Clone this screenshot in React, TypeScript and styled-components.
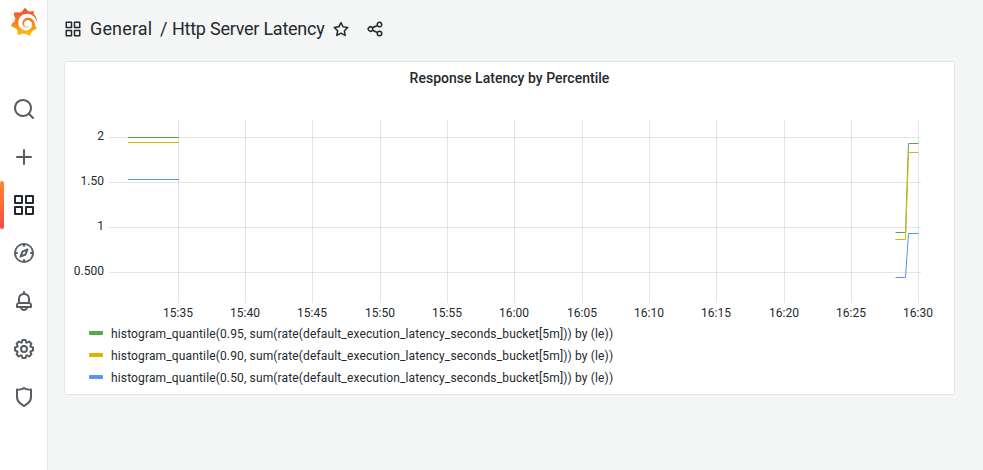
import React from "react";
import styled, { createGlobalStyle } from "styled-components";
import { SiGrafana } from "react-icons/si";

const GlobalStyle = createGlobalStyle`
  *, *::before, *::after { box-sizing: border-box; }
  body {
    margin: 0;
    background: #f4f5f5;
    color: #24292e;
    font-family: Roboto, "Liberation Sans", sans-serif;
    font-size: 14px;
  }
`;

const paths = {
  search:
    "M21.71,20.29,18,16.61A9,9,0,1,0,16.61,18l3.68,3.68a1,1,0,0,0,1.42,0A1,1,0,0,0,21.71,20.29ZM11,18a7,7,0,1,1,7-7A7,7,0,0,1,11,18Z",
  plus: "M19,11H13V5a1,1,0,0,0-2,0v6H5a1,1,0,0,0,0,2h6v6a1,1,0,0,0,2,0V13h6a1,1,0,0,0,0-2Z",
  apps: "M10,13H3a1,1,0,0,0-1,1v7a1,1,0,0,0,1,1h7a1,1,0,0,0,1-1V14A1,1,0,0,0,10,13ZM9,20H4V15H9ZM21,2H14a1,1,0,0,0-1,1v7a1,1,0,0,0,1,1h7a1,1,0,0,0,1-1V3A1,1,0,0,0,21,2ZM20,9H15V4h5Zm1,4H14a1,1,0,0,0-1,1v7a1,1,0,0,0,1,1h7a1,1,0,0,0,1-1V14A1,1,0,0,0,21,13Zm-1,7H15V15h5ZM10,2H3A1,1,0,0,0,2,3v7a1,1,0,0,0,1,1h7a1,1,0,0,0,1-1V3A1,1,0,0,0,10,2ZM9,9H4V4H9Z",
  compass:
    "M12,2A10,10,0,1,0,22,12,10,10,0,0,0,12,2Zm1,17.93V19a1,1,0,0,0-2,0v.93A8,8,0,0,1,4.07,13H5a1,1,0,0,0,0-2H4.07A8,8,0,0,1,11,4.07V5a1,1,0,0,0,2,0V4.07A8,8,0,0,1,19.93,11H19a1,1,0,0,0,0,2h.93A8,8,0,0,1,13,19.93ZM15.14,7.55l-5,2.12a1,1,0,0,0-.52.52l-2.12,5a1,1,0,0,0,.21,1.1,1,1,0,0,0,.7.29.93.93,0,0,0,.4-.08l5-2.12a1,1,0,0,0,.52-.52l2.12-5a1,1,0,0,0-1.31-1.31Zm-2.49,5.1-2.28,1,1-2.28,2.28-1Z",
  bell: "M18,13.18V10a6,6,0,0,0-5-5.91V3a1,1,0,0,0-2,0V4.09A6,6,0,0,0,6,10v3.18A3,3,0,0,0,4,16v2a1,1,0,0,0,1,1H8.14a4,4,0,0,0,7.72,0H19a1,1,0,0,0,1-1V16A3,3,0,0,0,18,13.18ZM8,10a4,4,0,0,1,8,0v3H8Zm4,10a2,2,0,0,1-1.72-1h3.44A2,2,0,0,1,12,20Zm6-3H6V16a1,1,0,0,1,1-1H17a1,1,0,0,1,1,1Z",
  cog: "M21.32,9.55l-1.89-.63.89-1.78A1,1,0,0,0,20.13,6L18,3.87a1,1,0,0,0-1.15-.19l-1.78.89-.63-1.89A1,1,0,0,0,13.5,2h-3a1,1,0,0,0-.95.68L8.92,4.57,7.14,3.68A1,1,0,0,0,6,3.87L3.87,6a1,1,0,0,0-.19,1.15l.89,1.78-1.89.63A1,1,0,0,0,2,10.5v3a1,1,0,0,0,.68.95l1.89.63-.89,1.78A1,1,0,0,0,3.87,18L6,20.13a1,1,0,0,0,1.15.19l1.78-.89.63,1.89a1,1,0,0,0,.95.68h3a1,1,0,0,0,.95-.68l.63-1.89,1.78.89A1,1,0,0,0,18,20.13L20.13,18a1,1,0,0,0,.19-1.15l-.89-1.78,1.89-.63A1,1,0,0,0,22,13.5v-3A1,1,0,0,0,21.32,9.55ZM20,12.78l-1.2.4A2,2,0,0,0,17.64,16l.57,1.14-1.1,1.1L16,17.64a2,2,0,0,0-2.79,1.16l-.4,1.2H11.22l-.4-1.2A2,2,0,0,0,8,17.64l-1.14.57-1.1-1.1L6.36,16A2,2,0,0,0,5.2,13.18L4,12.78V11.22l1.2-.4A2,2,0,0,0,6.36,8L5.79,6.89l1.1-1.1L8,6.36A2,2,0,0,0,10.82,5.2l.4-1.2h1.56l.4,1.2A2,2,0,0,0,16,6.36l1.14-.57,1.1,1.1L17.64,8a2,2,0,0,0,1.16,2.79l1.2.4ZM12,8a4,4,0,1,0,4,4A4,4,0,0,0,12,8Zm0,6a2,2,0,1,1,2-2A2,2,0,0,1,12,14Z",
  shield:
    "M19.63,3.65a1,1,0,0,0-.84-.2,8,8,0,0,1-6.22-1.27,1,1,0,0,0-1.14,0A8,8,0,0,1,5.21,3.45a1,1,0,0,0-.84.2A1,1,0,0,0,4,4.43v7.45a9,9,0,0,0,3.77,7.33l3.65,2.6a1,1,0,0,0,1.16,0l3.65-2.6A9,9,0,0,0,20,11.88V4.43A1,1,0,0,0,19.63,3.65ZM18,11.88a7,7,0,0,1-2.93,5.7L12,19.77,8.93,17.58A7,7,0,0,1,6,11.88V5.58a10,10,0,0,0,6-1.39,10,10,0,0,0,6,1.39Z",
  star: "M22,9.67A1,1,0,0,0,21.14,9l-5.69-.83L12.9,3a1,1,0,0,0-1.8,0L8.55,8.16,2.86,9a1,1,0,0,0-.81.68,1,1,0,0,0,.25,1l4.13,4-1,5.68A1,1,0,0,0,6.9,21.44L12,18.77l5.1,2.67a.93.93,0,0,0,.46.12,1,1,0,0,0,.59-.19,1,1,0,0,0,.4-1l-1-5.68,4.13-4A1,1,0,0,0,22,9.67Zm-6.15,4a1,1,0,0,0-.29.88l.72,4.2-3.76-2a1.06,1.06,0,0,0-.94,0l-3.76,2,.72-4.2a1,1,0,0,0-.29-.88l-3-3,4.21-.61a1,1,0,0,0,.76-.55L12,5.7l1.88,3.82a1,1,0,0,0,.76.55l4.21.61Z",
  share:
    "M18,14a4,4,0,0,0-3.08,1.48l-5.1-2.35a3.64,3.64,0,0,0,0-2.26l5.1-2.35A4,4,0,1,0,14,6a4.17,4.17,0,0,0,.07.71L8.79,9.14a4,4,0,1,0,0,5.72l5.28,2.43A4.17,4.17,0,0,0,14,18a4,4,0,1,0,4-4ZM18,4a2,2,0,1,1-2,2A2,2,0,0,1,18,4ZM6,14a2,2,0,1,1,2-2A2,2,0,0,1,6,14Zm12,6a2,2,0,1,1,2-2A2,2,0,0,1,18,20Z",
};

type IconName = keyof typeof paths;

const Svg = styled.svg`
  display: block;
  flex: none;
  fill: currentColor;
`;

function Icon({ name, size }: { name: IconName; size: number }) {
  return (
    <Svg width={size} height={size} viewBox="0 0 24 24" aria-hidden="true">
      <path d={paths[name]} />
    </Svg>
  );
}

const Page = styled.div`
  display: flex;
  width: 983px;
  height: 470px;
  overflow: hidden;
`;

const Sidebar = styled.nav`
  display: flex;
  flex-direction: column;
  flex: none;
  width: 48px;
  background: #fff;
  border-right: 1px solid #e4e5e6;
`;

const Logo = styled.a`
  display: flex;
  justify-content: center;
  height: 85px;
  padding: 8px 0 0 1px;
`;

const NavItem = styled.a<{ $active?: boolean }>`
  display: flex;
  align-items: center;
  height: 48px;
  color: ${(p) => (p.$active ? "#24292e" : "#585d62")};

  &::before {
    content: "";
    width: 4px;
    height: 48px;
    margin-right: 8px;
    border-radius: 2px;
    background: ${(p) => (p.$active ? "linear-gradient(#ff8833, #fb4a45)" : "none")};
  }
`;

const Main = styled.main`
  flex: 1;
  padding: 0 28px 0 16px;
`;

const Toolbar = styled.header`
  display: flex;
  align-items: center;
  height: 58px;
  margin-bottom: 3px;
  white-space: nowrap;
`;

const Crumb = styled.span<{ $width: number; $tracking?: number }>`
  flex: none;
  width: ${(p) => p.$width}px;
  font-size: 18px;
  line-height: 24px;
  letter-spacing: ${(p) => p.$tracking ?? 0}px;
`;

const Crumbs = styled.div`
  display: flex;
  margin-left: 8px;
`;

const ToolButton = styled.button<{ $gap: number }>`
  display: flex;
  margin: 0 0 0 ${(p) => p.$gap}px;
  padding: 0;
  border: 0;
  background: none;
  color: inherit;
`;

const Panel = styled.section`
  width: 891px;
  height: 334px;
  background: #fff;
  border: 1px solid #e4e5e6;
  border-radius: 2px;
`;

const PanelTitle = styled.h2`
  margin: 0;
  height: 32px;
  line-height: 32px;
  font-size: 14px;
  font-weight: 500;
  text-align: center;
  letter-spacing: 0.02px;
`;

const Chart = styled.svg`
  display: block;
  font-size: 12px;
  fill: #24292e;
`;

const Legend = styled.ul`
  list-style: none;
  margin: 0;
  padding: 0 0 0 24px;
`;

const LegendItem = styled.li`
  display: flex;
  align-items: center;
  height: 22px;
  font-size: 12px;
  letter-spacing: 0.144px;
`;

const LegendLabel = styled.span`
  padding-top: 2px;
`;

const Swatch = styled.span<{ $color: string }>`
  width: 14px;
  height: 4px;
  margin-right: 8px;
  border-radius: 1px;
  background: ${(p) => p.$color};
`;

const navItems: IconName[] = ["search", "plus", "apps", "compass", "bell", "cog", "shield"];

const xTicks: [number, string][] = [
  [178, "15:35"], [245, "15:40"], [312, "15:45"], [380, "15:50"],
  [447, "15:55"], [514, "16:00"], [582, "16:05"], [649, "16:10"],
  [716, "16:15"], [784, "16:20"], [851, "16:25"], [918, "16:30"],
];

const yTicks: [number, string][] = [
  [137, "2"], [182, "1.50"], [227, "1"], [272, "0.500"],
];

const series = [
  {
    color: "#56a64b",
    label: "histogram_quantile(0.95, sum(rate(default_execution_latency_seconds_bucket[5m])) by (le))",
    d: "M128,137.5H179M895.5,232.5H905.5L908.5,143.5H918.5",
  },
  {
    color: "#e0b400",
    label: "histogram_quantile(0.90, sum(rate(default_execution_latency_seconds_bucket[5m])) by (le))",
    d: "M128,142.5H179M895.5,239.5H905.5L908.5,152.5H918.5",
  },
  {
    color: "#5794f2",
    label: "histogram_quantile(0.50, sum(rate(default_execution_latency_seconds_bucket[5m])) by (le))",
    d: "M128,179.5H179M895.5,277.5H905.5L908.5,233.5H918.5",
  },
];

export default function App() {
  return (
    <Page>
      <GlobalStyle />
      <Sidebar>
        <Logo>
          <svg width="0" height="0">
            <linearGradient id="flame" x1="0" y1="1" x2="0" y2="0">
              <stop offset="0" stopColor="#fcc80c" />
              <stop offset="0.45" stopColor="#f58422" />
              <stop offset="1" stopColor="#ee4f2c" />
            </linearGradient>
          </svg>
          <SiGrafana size={28} fill="url(#flame)" />
        </Logo>
        {navItems.map((name) => (
          <NavItem key={name} $active={name === "apps"}>
            <Icon name={name} size={24} />
          </NavItem>
        ))}
      </Sidebar>
      <Main>
        <Toolbar>
          <Icon name="apps" size={18} />
          <Crumbs>
            <Crumb $width={70} $tracking={0.15}>General</Crumb>
            <Crumb $width={12}>/</Crumb>
            <Crumb $width={152} $tracking={-0.25}>Http Server Latency</Crumb>
          </Crumbs>
          <ToolButton $gap={8}>
            <Icon name="star" size={18} />
          </ToolButton>
          <ToolButton $gap={16}>
            <Icon name="share" size={18} />
          </ToolButton>
        </Toolbar>
        <Panel>
          <PanelTitle>Response Latency by Percentile</PanelTitle>
          <Chart width="889" height="228" viewBox="65 94 889 228">
            <g fill="none" stroke="rgba(0,10,23,0.1)">
              {yTicks.map(([y]) => (
                <path key={y} d={`M109,${y + 0.5}H921`} />
              ))}
              {xTicks.map(([x]) => (
                <path key={x} d={`M${x + 0.5},120V303`} />
              ))}
            </g>
            {yTicks.map(([y, label]) => (
              <text key={label} x="104" y={y + 3} textAnchor="end">{label}</text>
            ))}
            {xTicks.map(([x, label]) => (
              <text key={label} x={x} y="317" textAnchor="middle">{label}</text>
            ))}
            {series.map((s) => (
              <path key={s.color} d={s.d} fill="none" stroke={s.color} />
            ))}
          </Chart>
          <Legend>
            {series.map((s) => (
              <LegendItem key={s.color}>
                <Swatch $color={s.color} />
                <LegendLabel>{s.label}</LegendLabel>
              </LegendItem>
            ))}
          </Legend>
        </Panel>
      </Main>
    </Page>
  );
}
